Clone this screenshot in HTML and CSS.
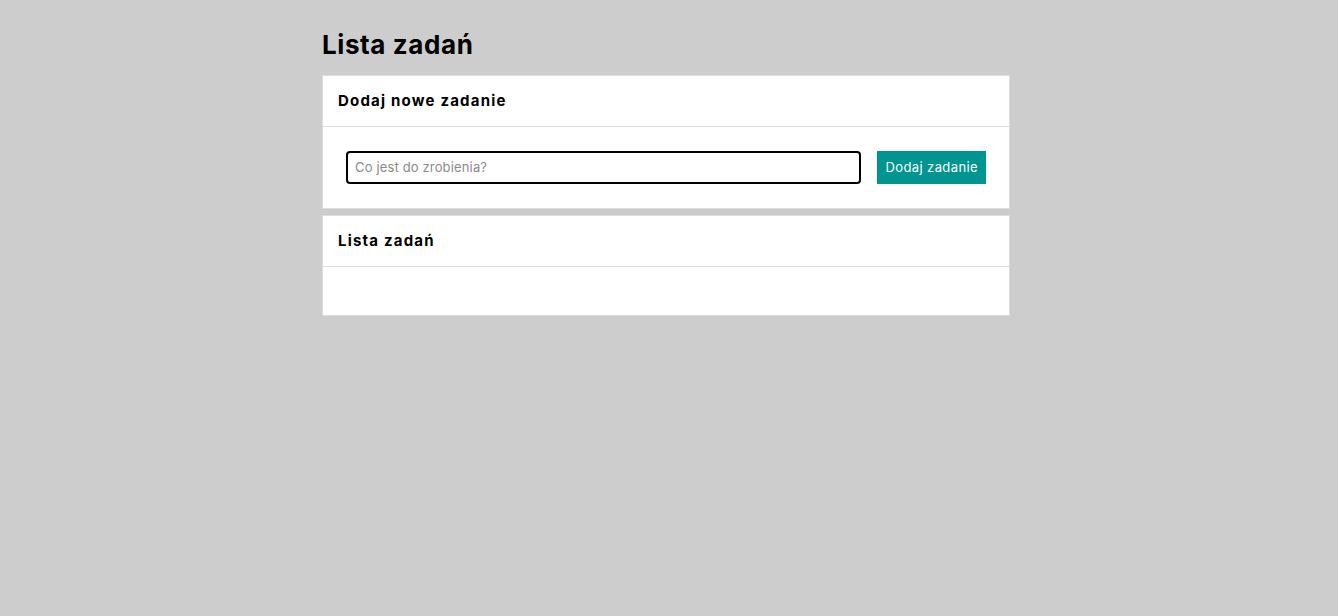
FILE: index.html
```html
<!DOCTYPE html>
<html lang="pl">
<head>
<meta charset="utf-8">
<title>Lista zadań</title>
<link rel="stylesheet" href="styles.css">
</head>
<body>
<main class="container">
  <h1 class="title">Lista zadań</h1>
  <section class="card">
    <header class="card-header"><h2 class="card-title">Dodaj nowe zadanie</h2></header>
    <div class="card-body form-row">
      <input class="task-input" type="text" placeholder="Co jest do zrobienia?">
      <button class="btn" type="button">Dodaj zadanie</button>
    </div>
  </section>
  <section class="card">
    <header class="card-header"><h2 class="card-title">Lista zadań</h2></header>
    <div class="card-body list-body"></div>
  </section>
</main>
</body>
</html>
```
FILE: styles.css
```css
* { box-sizing: border-box; }
html, body { margin: 0; padding: 0; }
body {
  background: #cdcdcd;
  font-family: Inter, "Noto Sans", sans-serif;
  color: #000;
  min-height: 616px;
}
.container {
  width: 688px;
  margin-left: calc(50% - 347px);
  padding-top: 28px;
  display: flex;
  flex-direction: column;
  gap: 6px;
}
.title {
  margin: 0 0 8px;
  font-size: 26px;
  font-weight: 700;
  line-height: 33px;
  letter-spacing: 0.6px;
}
.card {
  background: #fff;
  border: 1px solid #dcdcdc;
}
.card-header {
  height: 51px;
  padding: 0 15px 2px;
  display: flex;
  align-items: center;
  border-bottom: 1px solid #dcdcdc;
}
.card-title {
  margin: 0;
  font-size: 15px;
  font-weight: 700;
  letter-spacing: 1.2px;
}
.card-body { padding: 24px 23px; }
.form-row { display: flex; gap: 16px; }
.task-input {
  flex: 1;
  height: 33px;
  border: 2px solid #000;
  border-radius: 4px;
  padding: 0 7px 2px;
  font-family: inherit;
  font-size: 13px;
  letter-spacing: 0.15px;
  color: #000;
  outline: none;
}
.task-input::placeholder { color: #8a8a8a; }
.btn {
  height: 33px;
  padding: 0 8px 2px;
  background: #009590;
  color: #fff;
  border: none;
  font-family: inherit;
  font-size: 13px;
  letter-spacing: 0.4px;
  cursor: pointer;
}
.list-body { height: 48px; padding: 0; }
```
